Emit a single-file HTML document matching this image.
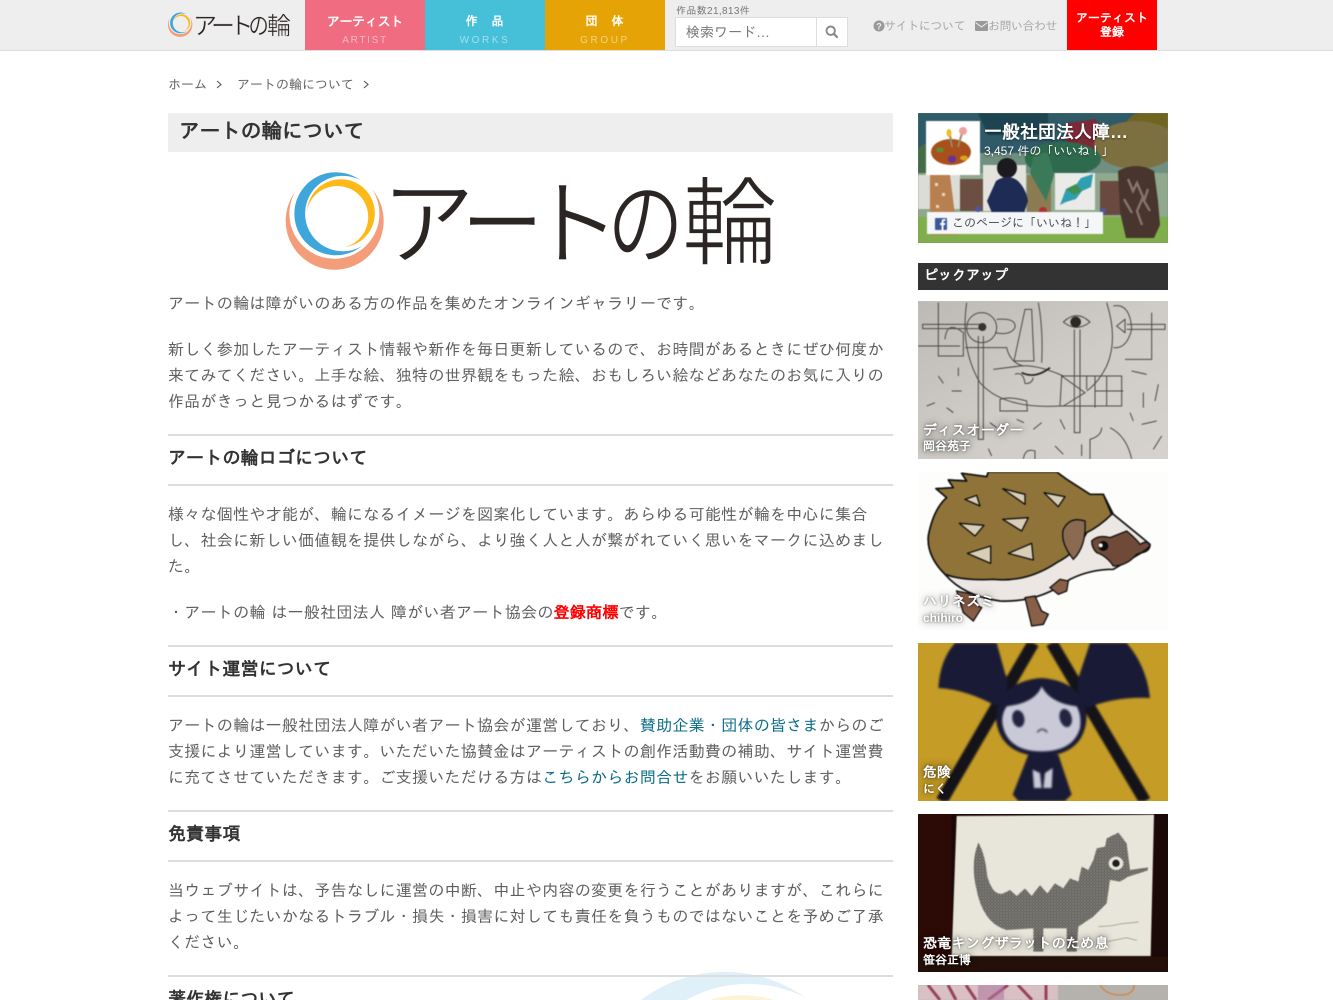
<!DOCTYPE html>
<html lang="ja"><head><meta charset="utf-8"><title>アートの輪について</title>
<style>
*{margin:0;padding:0;box-sizing:border-box}
html,body{width:1333px;height:1000px;overflow:hidden;background:#fff}
body{position:relative;font-family:"Liberation Sans","IPAGothic","Noto Sans CJK JP",sans-serif;color:#555}
.a{position:absolute;white-space:nowrap}
.t{position:absolute;left:168px;font-size:16px;letter-spacing:.27px;word-spacing:1px;line-height:26px;height:26px;white-space:nowrap;color:#5f5f5f;margin-top:2px}
.h{position:absolute;left:168px;width:725px;height:52px;border-top:2px solid #ddd;border-bottom:2px solid #ddd;font-size:18px;font-weight:bold;letter-spacing:.15px;line-height:45px;color:#333;white-space:nowrap;overflow:hidden}
.t a{color:#0b6c85;text-decoration:none}
.nav{position:absolute;top:0;width:120px;height:50px;color:#fff;text-align:center}
.nav b{display:block;font-size:13px;letter-spacing:-.3px;margin-top:14px;line-height:15px}
.nav i{display:block;font-style:normal;font-size:10px;letter-spacing:2.6px;margin-top:6px;line-height:12px;opacity:.5}
.card{position:absolute;left:918px;width:250px;height:158px;overflow:hidden}
.card svg{position:absolute;left:0;top:0;filter:blur(.5px)}
.card .n{position:absolute;left:5px;color:#fff;font-weight:bold;white-space:nowrap;text-shadow:0 0 2px rgba(0,0,0,.55),0 0 8px rgba(0,0,0,.55)}
</style></head><body>

<div class="a" style="left:0;top:0;width:1333px;height:51px;background:#eee;border-bottom:1px solid #ddd"></div>

<svg class="a" style="left:160px;top:5px" width="140" height="40" viewBox="0 0 140 40">
<defs><g id="ring">
<path fill="#f49d7b" d="M295,192A49,49 0 1 0 372,189A45,45 0 1 1 295,192Z"/>
<path fill="#3fa6dc" d="M360,180A41.5,41.5 0 1 0 362,246A37.7,37.7 0 1 1 360,180Z"/>
<path fill="#fcb918" d="M307,210A34,34 0 1 1 345,247A31,31 0 1 0 307,210Z"/>
</g></defs>
<g transform="translate(8,7.5) scale(.25) translate(-286,-172)"><use href="#ring"/></g>
<g fill="#2b2523" stroke="#eee" stroke-width=".35" font-size="24" font-family="'Noto Sans CJK JP',sans-serif">
<text x="33" y="29">ア</text><text x="51" y="29">ー</text><text x="69.5" y="29">ト</text><text transform="translate(88.5,29) scale(.85,1)">の</text><text x="107" y="29">輪</text>
</g></svg>

<div class="nav" style="left:305px;background:#f06c80"><b>アーティスト</b><i style="letter-spacing:1.7px">ARTIST</i></div>
<div class="nav" style="left:425px;background:#46bfd9"><b style="font-size:12px;letter-spacing:1px">作　品</b><i>WORKS</i></div>
<div class="nav" style="left:545px;background:#e6a305"><b style="font-size:12px;letter-spacing:1px">団　体</b><i>GROUP</i></div>

<div class="a" style="left:676px;top:5px;font-size:10px;letter-spacing:.35px;line-height:13px;color:#777">作品数21,813件</div>
<div class="a" style="left:675px;top:17px;width:173px;height:30px;background:#fff;border:1px solid #ddd"></div>
<div class="a" style="left:816px;top:18px;width:1px;height:28px;background:#ddd"></div>
<div class="a" style="left:686px;top:24px;font-size:14px;line-height:16px;color:#777">検索ワード…</div>
<svg class="a" style="left:825px;top:25px" width="14" height="14" viewBox="0 0 14 14"><circle cx="5.7" cy="5.7" r="4.2" fill="none" stroke="#888" stroke-width="1.9"/><path d="M8.8 8.8L12.6 12.6" stroke="#888" stroke-width="2.2"/></svg>

<svg class="a" style="left:873px;top:20px" width="12" height="12" viewBox="0 0 12 12"><circle cx="6" cy="6" r="5.5" fill="#999"/><text x="6" y="9.5" font-size="9" font-weight="bold" text-anchor="middle" fill="#eee" font-family="'Liberation Sans',sans-serif">?</text></svg>
<div class="a" style="left:884px;top:19px;font-size:12px;letter-spacing:-.4px;line-height:14px;color:#aaa">サイトについて</div>
<svg class="a" style="left:975px;top:21px" width="13" height="10" viewBox="0 0 13 10"><rect width="13" height="10" rx="1" fill="#999"/><path d="M0.5 1.5L6.5 6L12.5 1.5" fill="none" stroke="#eee" stroke-width="1"/></svg>
<div class="a" style="left:988px;top:19px;font-size:12px;letter-spacing:-.5px;line-height:14px;color:#aaa">お問い合わせ</div>
<div class="a" style="left:1067px;top:0;width:90px;height:50px;background:#f00;color:#fff;font-weight:bold;font-size:12px;line-height:14px;text-align:center;padding-top:11px">アーティスト<br>登録</div>

<div class="a" style="left:168px;top:77px;font-size:13px;line-height:15px;color:#666">ホーム</div>
<svg class="a" style="left:216px;top:80px" width="6" height="9" viewBox="0 0 6 9"><path d="M1 1L5 4.5L1 8" fill="none" stroke="#555" stroke-width="1.1"/></svg>
<div class="a" style="left:237px;top:77px;font-size:13px;line-height:15px;color:#666">アートの輪について</div>
<svg class="a" style="left:363px;top:80px" width="6" height="9" viewBox="0 0 6 9"><path d="M1 1L5 4.5L1 8" fill="none" stroke="#555" stroke-width="1.1"/></svg>

<div class="a" style="left:168px;top:113px;width:725px;height:39px;background:#eee;padding-left:11px;font-size:20.6px;font-weight:bold;line-height:38px;color:#333">アートの輪について</div>

<svg class="a" style="left:280px;top:165px" width="510" height="110" viewBox="280 165 510 110">
<use href="#ring"/>
<g fill="#2b2523" stroke="#fff" stroke-width="1.5" font-size="94" font-family="'Noto Sans CJK JP',sans-serif">
<text x="381" y="257">ア</text><text transform="translate(461,257) scale(.88,1)">ー</text><text x="527" y="257">ト</text><text transform="translate(607,257) scale(.82,1)">の</text><text x="682" y="257" font-size="96">輪</text>
</g></svg>

<div class="t" style="top:290px">アートの輪は障がいのある方の作品を集めたオンラインギャラリーです。</div>
<div class="t" style="top:336px">新しく参加したアーティスト情報や新作を毎日更新しているので、お時間があるときにぜひ何度か</div>
<div class="t" style="top:362px">来てみてください。上手な絵、独特の世界観をもった絵、おもしろい絵などあなたのお気に入りの</div>
<div class="t" style="top:388px">作品がきっと見つかるはずです。</div>

<div class="h" style="top:434px">アートの輪ロゴについて</div>
<div class="t" style="top:501px">様々な個性や才能が、輪になるイメージを図案化しています。あらゆる可能性が輪を中心に集合</div>
<div class="t" style="top:527px">し、社会に新しい価値観を提供しながら、より強く人と人が繋がれていく思いをマークに込めまし</div>
<div class="t" style="top:553px">た。</div>
<div class="t" style="top:599px">・アートの輪 は一般社団法人 障がい者アート協会の<span style="color:#f00;font-weight:bold">登録商標</span>です。</div>

<div class="h" style="top:645px">サイト運営について</div>
<div class="t" style="top:712px">アートの輪は一般社団法人障がい者アート協会が運営しており、<a>賛助企業・団体の皆さま</a>からのご</div>
<div class="t" style="top:738px">支援により運営しています。いただいた協賛金はアーティストの創作活動費の補助、サイト運営費</div>
<div class="t" style="top:764px">に充てさせていただきます。ご支援いただける方は<a>こちらからお問合せ</a>をお願いいたします。</div>

<div class="h" style="top:810px">免責事項</div>
<div class="t" style="top:877px">当ウェブサイトは、予告なしに運営の中断、中止や内容の変更を行うことがありますが、これらに</div>
<div class="t" style="top:903px">よって生じたいかなるトラブル・損失・損害に対しても責任を負うものではないことを予めご了承</div>
<div class="t" style="top:929px">ください。</div>
<svg class="a" style="left:560px;top:960px;opacity:.16" width="330" height="40" viewBox="560 960 330 40"><g transform="translate(722,1110) scale(3.35) translate(-335,-213.5)"><use href="#ring"/></g></svg>
<div class="h" style="top:975px;height:25px;border-bottom:none">著作権について</div>

<!-- Facebook widget -->
<div class="a" style="left:918px;top:113px;width:250px;height:130px;overflow:hidden;background:#6f8f80">
<svg width="250" height="130" viewBox="0 0 250 130" style="filter:blur(.4px)">
<rect width="250" height="130" fill="#6f8f80"/>
<rect width="250" height="40" fill="#2f5a68"/>
<path d="M150 10l28-4 12 22-24 14-18-14z" fill="#7d2a38"/>
<path d="M60 0h70v22H70z" fill="#1d4450"/>
<ellipse cx="235" cy="10" rx="26" ry="12" fill="#6f6420"/>
<ellipse cx="218" cy="32" rx="42" ry="24" fill="#7d7040"/>
<ellipse cx="145" cy="46" rx="38" ry="17" fill="#2e6b4e"/>
<ellipse cx="28" cy="48" rx="34" ry="22" fill="#456b48"/>
<rect x="0" y="60" width="250" height="45" fill="#8fa88e"/>
<rect y="104" width="250" height="26" fill="#7fae4a"/>
<rect x="0" y="62" width="42" height="34" fill="#dcdcd6"/>
<rect x="42" y="66" width="26" height="32" fill="#6d4f42"/>
<rect x="65" y="52" width="43" height="46" fill="#e4e2dc"/>
<rect x="109" y="62" width="24" height="38" fill="#8a7b52"/>
<path d="M112 60l4-20 14 0 6 22-8 26z" fill="#3a7a58"/>
<rect x="137" y="60" width="40" height="37" fill="#eaeae8"/>
<rect x="182" y="68" width="22" height="34" fill="#6a4a40"/>
<path d="M12 62h20l5 40 3 20H12z" fill="#b8804f"/>
<path d="M17 70h3v3h-3zM24 80h3v3h-3zM18 92h3v3h-3z" fill="#e8d8c0"/>
<path d="M142 92l6-16 9-3 6-8 12-4-2 13-9 4-6 8-10 3z" fill="#2f9fb0"/>
<path d="M148 76l10-5 6 7-8 4z" fill="#3f8f50"/>
<circle cx="89" cy="55" r="10" fill="#1b1a1e"/>
<path d="M78 68q12-8 22 0 8 8 10 20l-4 12H74L69 88z" fill="#1e2c55"/>
<path d="M200 58q18-10 36 0l4 30 2 24-6 13h-28l-6-26z" fill="#47352e"/>
<path d="M210 66l5 12 4-8 6 14-6 14 5 14M206 86l8 14M230 76l-4 12 6 10" stroke="#86746a" stroke-width="2.5" fill="none"/>
<circle cx="60" cy="96" r="3" fill="#4a58a0"/><circle cx="125" cy="98" r="4" fill="#b23030"/><circle cx="135" cy="102" r="3" fill="#b23030"/><circle cx="185" cy="98" r="3" fill="#4a58a0"/>
<rect x="8" y="8" width="54" height="54" fill="#fff"/>
<ellipse cx="33" cy="39" rx="20" ry="13" fill="#a84f1c"/>
<ellipse cx="22" cy="37" rx="4" ry="2.5" fill="#5f8f30"/>
<ellipse cx="34" cy="46" rx="4" ry="3.5" fill="#6a2f9a"/>
<ellipse cx="46" cy="45" rx="4" ry="2.5" fill="#e0a020"/>
<path d="M32 22l2 12M44 20l-4 14" stroke="#9a8a60" stroke-width="2"/>
<ellipse cx="31" cy="20" rx="2.5" ry="4" fill="#e8c020"/>
<ellipse cx="45" cy="18" rx="4" ry="4" fill="#eea0a0"/>
<rect x="9" y="99" width="176" height="22" fill="#f5f6f7"/>
<rect x="17" y="105" width="12" height="12" rx="1" fill="#3b5998"/>
<path d="M25.5 117v-5h1.6l.3-2h-1.9v-1.2q0-.9 1-.9h1v-1.8h-1.5q-2.4 0-2.4 2.4v1.5h-1.5v2h1.5v5z" fill="#fff"/>
</svg>
<div class="a" style="left:66px;top:8px;font-size:18px;font-weight:bold;line-height:22px;color:#fff;text-shadow:0 1px 2px rgba(0,0,0,.5)">一般社団法人障…</div>
<div class="a" style="left:66px;top:31px;font-size:12px;line-height:15px;color:#fff;text-shadow:0 1px 2px rgba(0,0,0,.5)">3,457 件の「いいね！」</div>
<div class="a" style="left:34px;top:102px;font-size:12px;line-height:16px;color:#4b4f56">このページに「いいね！」</div>
</div>

<div class="a" style="left:918px;top:263px;width:250px;height:27px;background:#333;color:#fff;font-weight:bold;font-size:14px;line-height:24px;padding-left:6px">ピックアップ</div>

<!-- Card 1 -->
<div class="card" style="top:301px;background:#cfccc7">
<svg width="250" height="158" viewBox="24 15 750 474">
<defs><linearGradient id="g1" x1="0" y1="0" x2="1" y2="1"><stop offset="0" stop-color="#bdbab5"/><stop offset=".5" stop-color="#cfccc7"/><stop offset="1" stop-color="#d6d3cf"/></linearGradient></defs>
<rect x="24" y="15" width="750" height="474" fill="url(#g1)"/>
<g fill="none" stroke="#4a4744" stroke-width="3">
<path d="M170 20Q150 160 210 260Q280 340 450 330M590 20Q625 130 590 210Q565 260 530 285"/>
<circle cx="215" cy="95" r="45"/>
<path d="M260 70Q320 65 315 95Q300 120 255 110M85 20V180H160V110Q110 70 105 130M38 85H220V98H38zM24 150H150"/>
<path d="M205 120V430H220V120M165 155H290Q300 200 340 210M345 40H365L372 195H312z"/>
<path d="M460 78Q500 40 540 78Q500 110 460 78zM493 100V410H510V100"/>
<path d="M385 20Q400 100 395 200M610 30Q660 20 665 100Q650 160 610 155M650 100H765V85H650M725 50V190H645"/>
<path d="M620 90L645 70V110zM455 240H635V330H450zM455 240L525 290L460 330M555 240V335M555 285H640M530 240V280M590 240V330"/>
<path d="M250 220L330 210Q380 205 460 240M315 235Q340 225 345 262Q365 265 370 245M270 310Q300 300 350 315L352 345H270z"/>
<path d="M665 225L710 235M745 265L735 315M125 285H155M50 330L75 320M110 335L130 350M145 215V240M85 240L100 262M700 290V335M695 385L740 375M660 350L670 375M320 370L342 380M370 400L395 380M450 370L465 400M240 380L260 395M730 460L755 420M515 445V480M435 450L460 475M235 458L245 480M540 489V430Q575 420 575 395M600 395Q650 420 665 489M340 489Q345 455 375 465V489"/>
</g>
<path d="M335 230Q375 250 420 215" stroke="#222" stroke-width="5" fill="none"/>
<circle cx="497" cy="78" r="16" fill="#2a2826"/>
<circle cx="217" cy="93" r="12" fill="#333"/>
</svg>
<div class="n" style="top:120px;font-size:14px;letter-spacing:.4px;line-height:18px">ディスオーダー</div>
<div class="n" style="top:138px;font-size:12px;line-height:15px">岡谷苑子</div>
</div>

<!-- Card 2 -->
<div class="card" style="top:472px;background:#fdfdfc">
<svg width="250" height="158" viewBox="24 18 750 474">
<rect x="24" y="18" width="750" height="474" fill="#fdfdfc"/>
<path d="M105 325Q50 270 55 210Q70 130 110 95L78 68L130 65L115 42L170 45L155 22L230 32L235 18H440L470 40L540 85L580 85L610 145Q690 210 720 235Q720 255 695 260L610 310Q540 310 480 340Q390 410 270 405Q160 390 105 325Z" fill="#ece7e3" stroke="#111" stroke-width="5" stroke-linejoin="round"/>
<path d="M105 325Q50 270 55 210Q70 130 110 95L78 68L130 65L115 42L170 45L155 22L230 32L235 18H440L470 40L540 85L580 85L605 145Q570 180 530 200Q500 260 440 290Q350 350 250 340Q160 345 105 325Z" fill="#8f7338" stroke="#111" stroke-width="5" stroke-linejoin="round"/>
<g fill="#d9cfb8" stroke="#111" stroke-width="4" stroke-linejoin="round">
<path d="M165 100L200 88L210 120z"/><path d="M278 68L345 85V115z"/><path d="M402 80L465 92L445 122z"/><path d="M148 172L222 178L195 210z"/><path d="M278 160L355 155L335 195z"/><path d="M172 262L242 240V292z"/><path d="M295 262L365 232L370 282z"/>
</g>
<path d="M490 280Q450 230 460 190Q480 150 525 165Q530 240 490 280Z" fill="#8a6a50" stroke="#111" stroke-width="4"/>
<path d="M545 225Q565 205 600 215L650 195Q680 220 690 235Q715 220 720 240Q700 260 680 265Q650 300 610 300Q590 270 560 260Q545 245 545 225Z" fill="#704a38" stroke="#111" stroke-width="4"/>
<circle cx="580" cy="240" r="15" fill="#0d0d0d"/><circle cx="572" cy="238" r="6" fill="#fff"/>
<path d="M140 375L190 385L205 420L215 425L190 465L160 440Z" fill="#8a5f48" stroke="#111" stroke-width="4"/>
<path d="M345 395L375 390L395 435L415 445L400 475L365 480Z" fill="#8a5f48" stroke="#111" stroke-width="4"/>
<path d="M420 365L450 340L475 345L470 375L445 385Z" fill="#8a5f48" stroke="#111" stroke-width="4"/>
</svg>
<div class="n" style="top:120px;font-size:14px;letter-spacing:.4px;line-height:18px">ハリネズミ</div>
<div class="n" style="top:139px;font-size:12px;line-height:15px">chihiro</div>
</div>

<!-- Card 3 -->
<div class="card" style="top:643px;background:#c49c26">
<svg width="250" height="158" viewBox="24 10 750 474" style="filter:blur(1px)">
<rect x="24" y="10" width="750" height="474" fill="#c49c26"/>
<g stroke="#14131a" stroke-width="36" fill="none"><path d="M370 10L95 484M425 10L705 484"/></g>
<path d="M135 10H260L285 100Q310 150 260 200Q170 150 85 145Q90 60 135 10Z" fill="#191a35"/>
<path d="M540 10H650Q710 80 720 175Q620 170 530 205Q490 150 510 100Z" fill="#191a35"/>
<path d="M395 115Q265 125 258 240Q270 345 395 350Q525 345 530 230Q520 125 395 115Z" fill="#191a35"/>
<path d="M395 140Q375 190 290 200Q270 230 280 265Q300 335 395 335Q490 335 510 265Q515 225 500 200Q420 190 395 140Z" fill="#c9c9d8"/>
<ellipse cx="325" cy="237" rx="18" ry="26" fill="#23243f" transform="rotate(-12 325 237)"/>
<ellipse cx="467" cy="235" rx="18" ry="28" fill="#23243f" transform="rotate(-15 467 235)"/>
<path d="M382 278Q396 260 412 278" stroke="#23243f" stroke-width="4" fill="none"/>
<path d="M355 345H445L485 465L465 484H325L308 465Z" fill="#191a35"/>
<path d="M368 390L390 400 395 445H372zM428 385L405 400 400 445H425z" fill="#c9c9d8"/>
</svg>
<div class="n" style="top:120px;font-size:14px;line-height:18px">危険</div>
<div class="n" style="top:139px;font-size:12px;line-height:15px">にく</div>
</div>

<!-- Card 4 -->
<div class="card" style="top:814px;background:#1a0907">
<svg width="250" height="158" viewBox="24 12 750 474">
<defs><pattern id="st" width="9" height="9" patternUnits="userSpaceOnUse"><rect width="9" height="9" fill="#5c5a56"/><circle cx="3" cy="3" r="2.2" fill="#a8a69e"/><circle cx="7.5" cy="7.5" r="1.6" fill="#a8a69e"/></pattern></defs>
<rect x="24" y="12" width="750" height="474" fill="#1a0907"/>
<rect x="24" y="12" width="100" height="474" fill="#2c0a06"/>
<path d="M140 18L732 14L722 438H125Z" fill="#e8e6da"/>
<path d="M205 98Q225 130 232 200Q250 260 280 250L300 240L320 258L345 235L365 258L390 225L412 250L435 220L460 235L480 205L505 215L515 170L535 180L550 150L560 115L585 110L590 85L625 68L650 100L660 180L715 172L712 182L655 200L630 215L600 210L590 280L550 320L505 350L500 425H470V355H400V425H370V355L290 360Q220 340 200 240Q180 160 205 98Z" fill="url(#st)"/>
<ellipse cx="618" cy="160" rx="22" ry="20" fill="#e8e6da"/>
<circle cx="618" cy="160" r="11" fill="#211d1a"/>
<path d="M565 350l40-3 30-6 50-5M590 395l60-12 30 8" stroke="#8a8880" stroke-width="2" fill="none"/>
<rect x="24" y="440" width="750" height="46" fill="#241008"/>
</svg>
<div class="n" style="top:120px;font-size:14px;letter-spacing:.3px;line-height:18px">恐竜キングザラットのため息</div>
<div class="n" style="top:139px;font-size:12px;line-height:15px">笹谷正博</div>
</div>

<!-- Card 5 -->
<div class="a" style="left:918px;top:985px;width:250px;height:15px;overflow:hidden;background:#b5b2ad">
<svg width="250" height="15" viewBox="0 0 250 15" style="filter:blur(.5px)"><rect width="140" height="15" fill="#d8c0c4"/><path d="M10 0l12 15M30 0l8 15M48 0l10 15M70 15l20-15M100 0l14 15M128 0v15" stroke="#9a4060" stroke-width="3"/><path d="M60 0h26v15H60z" fill="#b07aa0" opacity=".6"/><path d="M182 0q6 10 20 10t14-10" fill="none" stroke="#cc8a4a" stroke-width="1.5"/></svg>
</div>
</body></html>
